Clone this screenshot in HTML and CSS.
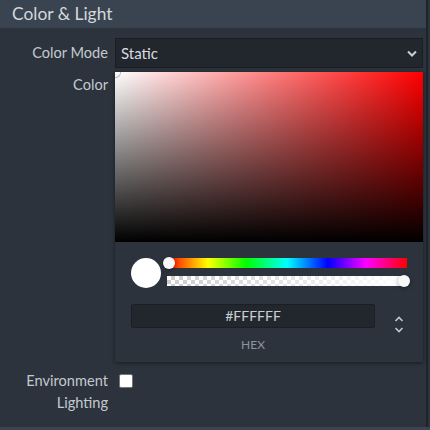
FILE: index.html
```html
<!DOCTYPE html>
<html>
<head>
<meta charset="utf-8">
<link rel="stylesheet" href="styles.css">
</head>
<body>
<div class="panel">
  <div class="header">Color &amp; Light</div>
  <div class="content">
    <div class="row">
      <div class="label mid">Color Mode</div>
      <div class="select">
        <span>Static</span>
        <svg class="chev" width="10" height="7" viewBox="0 0 10 7"><path d="M1 1.5 L5 5.5 L9 1.5" fill="none" stroke="#c9ced4" stroke-width="2"/></svg>
      </div>
    </div>
    <div class="row">
      <div class="label top">Color</div>
      <div class="picker">
        <div class="sat"><div class="sat-ptr"></div></div>
        <div class="pbody">
          <div class="controls">
            <div class="swatch"></div>
            <div class="sliders">
              <div class="hue"><div class="thumb thumb-left"></div></div>
              <div class="alpha"><div class="alpha-grad"></div><div class="thumb thumb-right"></div></div>
            </div>
          </div>
          <div class="fields">
            <div class="field">
              <div class="hex-input">#FFFFFF</div>
              <div class="hex-label">HEX</div>
            </div>
            <div class="toggle">
              <svg width="10" height="20" viewBox="0 0 10 20"><path d="M1.5 6 L5 2.5 L8.5 6" fill="none" stroke="#c3c8cf" stroke-width="1.6"/><path d="M1.5 13 L5 16.5 L8.5 13" fill="none" stroke="#c3c8cf" stroke-width="1.6"/></svg>
            </div>
          </div>
        </div>
      </div>
    </div>
    <div class="row env">
      <div class="label">Environment<br>Lighting</div>
      <div class="checkbox-cell"><div class="checkbox"></div></div>
    </div>
  </div>
</div>
<div class="next"></div>
</body>
</html>
```
FILE: styles.css
```css
html, body {
  margin: 0;
  padding: 0;
}
body {
  width: 430px;
  height: 430px;
  overflow: hidden;
  background: #2c333c;
  font-family: Lato, "Open Sans", sans-serif;
  color: #c7ccd2;
  position: relative;
}
.panel {
  width: 426px;
  height: 427px;
  border-right: 2px solid #1f242a;
  background: #2c333c;
}
.header {
  height: 28px;
  line-height: 28px;
  background: #3a4450;
  padding-left: 12px;
  font-size: 17.4px;
  color: #d4d8dc;
}
.content {
  padding: 10px 3px 0 0;
  display: flex;
  flex-direction: column;
  gap: 4px;
}
.row {
  display: grid;
  grid-template-columns: 108px 1fr;
  column-gap: 7px;
}
.label {
  text-align: right;
  font-size: 14.6px;
  line-height: 22px;
  color: #c3c9d0;
}
.label.mid {
  line-height: 30px;
}
.label.top {
  padding-top: 2px;
}
.select {
  height: 28px;
  background: #22272e;
  border: 1px solid #1a1e23;
  display: flex;
  align-items: center;
  justify-content: space-between;
  padding: 0 5px 0 5px;
  font-size: 15px;
  color: #d8dce0;
}
.picker {
  width: 308px;
  background: #2c333d;
  box-shadow: 0 1px 4px rgba(0,0,0,0.45);
}
.sat {
  height: 170px;
  position: relative;
  overflow: hidden;
  background:
    linear-gradient(to top, #000, rgba(0,0,0,0)),
    linear-gradient(to right, #fff, rgba(255,255,255,0)),
    #ff0000;
}
.sat-ptr {
  position: absolute;
  left: -5px;
  top: -5px;
  width: 8px;
  height: 8px;
  border-radius: 50%;
  border: 1.5px solid #fff;
  box-shadow: 0 0 1px 1px rgba(0,0,0,0.3);
}
.pbody {
  padding: 16px 16px 10px 16px;
}
.controls {
  display: flex;
  align-items: flex-start;
  gap: 6px;
}
.swatch {
  width: 30px;
  height: 30px;
  border-radius: 50%;
  background: #fff;
}
.sliders {
  flex: 1;
  display: flex;
  flex-direction: column;
  gap: 8px;
}
.hue, .alpha {
  height: 10px;
  position: relative;
}
.hue {
  background: linear-gradient(to right, #f00 0%, #ff0 17%, #0f0 33%, #0ff 50%, #00f 67%, #f0f 83%, #f00 100%);
}
.alpha {
  background-color: #fff;
  background-image:
    linear-gradient(45deg, #ccc 25%, transparent 25%, transparent 75%, #ccc 75%),
    linear-gradient(45deg, #ccc 25%, transparent 25%, transparent 75%, #ccc 75%);
  background-size: 8px 8px;
  background-position: 0 0, 4px 4px;
}
.alpha-grad {
  position: absolute;
  inset: 0;
  background: linear-gradient(to right, rgba(255,255,255,0), #fff);
}
.thumb {
  position: absolute;
  top: -1px;
  width: 12px;
  height: 12px;
  border-radius: 50%;
  background: #f8f8f8;
  box-shadow: 0 1px 4px rgba(0,0,0,0.37);
}
.thumb-left { left: -4px; }
.thumb-right { right: -3px; }
.fields {
  display: flex;
  margin-top: 16px;
}
.field {
  width: 244px;
  display: flex;
  flex-direction: column;
  align-items: center;
}
.hex-input {
  box-sizing: border-box;
  width: 244px;
  height: 24px;
  line-height: 22px;
  background: #22272e;
  border: 1px solid #1c2026;
  border-radius: 2px;
  text-align: center;
  font-size: 14px;
  color: #c9ced4;
}
.hex-label {
  margin-top: 10px;
  font-size: 12px;
  line-height: 14px;
  color: #8d939b;
}
.toggle {
  flex: 1;
  display: flex;
  justify-content: center;
  padding-left: 16px;
  padding-top: 11px;
}
.env {
  margin-top: 4px;
}
.checkbox-cell {
  padding-top: 4px;
  padding-left: 4px;
}
.checkbox {
  width: 12px;
  height: 12px;
  background: #fff;
  border: 1px solid #767676;
  border-radius: 2px;
}
.next {
  position: absolute;
  left: 0;
  top: 427px;
  width: 430px;
  height: 3px;
  background: #3a4450;
}
```
